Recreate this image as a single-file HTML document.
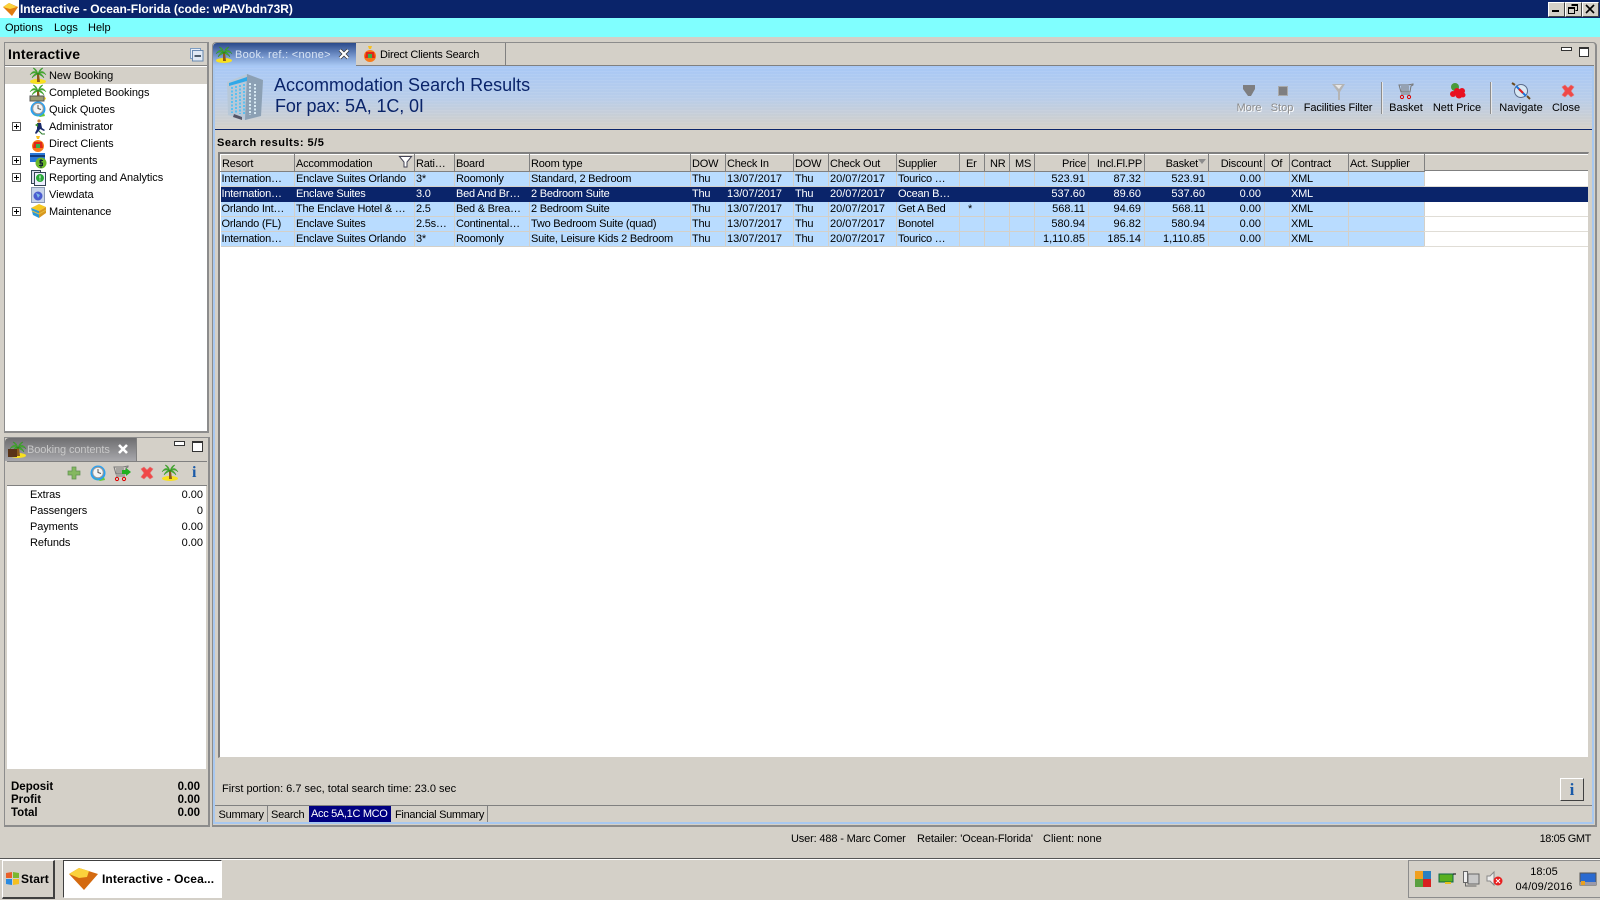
<!DOCTYPE html>
<html><head><meta charset="utf-8"><title>Interactive - Ocean-Florida</title>
<style>
html,body{margin:0;padding:0}
body{width:1600px;height:900px;overflow:hidden;background:#d4d0c8;position:relative;font:11px "Liberation Sans",sans-serif;color:#000}
.a{position:absolute;white-space:nowrap}
svg{position:absolute;overflow:visible}
.tree{left:49px;line-height:17px;height:17px;letter-spacing:-.06px}
.pl{position:absolute;left:12px;width:7px;height:7px;border:1px solid #555;background:#fff}
.pl:before{content:"";position:absolute;left:1px;top:3px;width:5px;height:1px;background:#000}
.pl:after{content:"";position:absolute;left:3px;top:1px;width:1px;height:5px;background:#000}
table{position:absolute;left:220px;top:154px;border-collapse:collapse;table-layout:fixed;width:1204px}
th{height:17px;padding:1px 2px 0 1px;font-weight:normal;text-align:left;background:#d4d0c8;border-top:1px solid #fff;border-left:1px solid #fff;border-right:1px solid #808080;border-bottom:1px solid #808080;box-sizing:border-box;overflow:hidden;white-space:nowrap;letter-spacing:-.2px}
td{height:15px;padding:0 3px 0 1px;background:#b9dcff;border-right:1px solid #d4d0c8;border-bottom:1px solid #d4d0c8;box-sizing:border-box;overflow:hidden;white-space:nowrap;line-height:13px;letter-spacing:-.23px}
td.n,td.r{letter-spacing:0}
tr.s td{background:#0a246a;color:#fff;border-color:#0a246a}
.r{text-align:right}
.tool{top:102px;line-height:13px;transform:translateX(-50%)}
.dis{color:#8c8c8c;text-shadow:1px 1px 0 #fff}
.b{font-weight:bold}
.winb{top:2px;width:15px;height:13px;background:#d4d0c8;border-top:1px solid #fff;border-left:1px solid #fff;border-right:1px solid #404040;border-bottom:1px solid #404040;box-sizing:content-box}
</style></head><body>
<svg width="0" height="0" style="position:absolute">
<defs>
<g id="palm"><ellipse cx="8" cy="14.500" rx="8" ry="2.500" fill="#f8e020"/><path d="M7 15l0-8h2l1 8z" fill="#8a5a1c"/><path d="M8 7C5 3 2 4 0 8 3 5 5 6 8 7zM8 7C11 3 14 4 16 8 13 5 11 6 8 7zM8 7C7 3 5 1 3 1 5 3 6 5 8 7zM8 7C9 3 11 1 13 1 11 3 10 5 8 7zM8 7C5 6 3 8 2 11 4 9 6 8 8 7zM8 7C11 6 13 8 14 11 12 9 10 8 8 7z" fill="#46b030" stroke="#2a8a1a" stroke-width=".4"/></g>
<g id="clock"><circle cx="8" cy="8" r="7.500" fill="#2aa0f0"/><circle cx="8" cy="7.500" r="5.300" fill="#f4f4f4" stroke="#999"/><path d="M8 4v3.500l3 1" stroke="#555" fill="none"/><path d="M4 13c3 3 7 3 10-1l1 3-5 1z" fill="#68c83a"/></g>
<g id="x"><path d="M2 3l3-2 3 3 3-3 3 2-3 4 3 4-3 2-3-3-3 3-3-2 3-4z" fill="#f04848" stroke="#e07878" stroke-width=".6"/></g>
<g id="cart"><path d="M0 2h9l5-1v1l-2 1-1 6H2z" fill="none" stroke="#777"/><path d="M3 3v6M5 3v6M7 3v6M9 3v6" stroke="#777"/><path d="M2 11h9" stroke="#777"/><circle cx="3" cy="14" r="1.600" fill="none" stroke="#d00"/><circle cx="10" cy="14" r="1.600" fill="none" stroke="#d00"/></g>
<g id="client"><path d="M6 0h4l-1 3H7z" fill="#f8c020"/><circle cx="8" cy="10" r="6" fill="#f87a18"/><path d="M4 6h8l1 6H3z" fill="#e02818"/><rect x="6" y="8" width="4" height="4" fill="#3ab04a"/></g>
</defs></svg>

<!-- title bar -->
<div class="a" style="left:0;top:0;width:1600px;height:18px;background:#0a246a"></div>
<div class="a" style="left:0;top:0;width:19px;height:18px;background:#fff"></div>
<svg style="left:3px;top:3px" width="16" height="13"><path d="M0 4 6 0l9 4-6 9z" fill="#e07a10"/><path d="M0 4 6 0l8 4-7 2z" fill="#fbd23c"/></svg>
<div class="a b" style="left:20px;top:1px;color:#fff;font-size:12px;line-height:16px;letter-spacing:-.03px">Interactive - Ocean-Florida (code: wPAVbdn73R)</div>
<div class="a winb" style="left:1548px"></div><div class="a" style="left:1552px;top:10px;width:7px;height:2px;background:#000"></div>
<div class="a winb" style="left:1565px"></div><svg style="left:1568px;top:4px" width="11" height="11"><path d="M3.500 .5h6v6h-2M.5 3.500h6v6h-6zM.5 4.500h6M3.500 1.500h6" fill="none" stroke="#000"/></svg>
<div class="a winb" style="left:1582px"></div><svg style="left:1586px;top:5px" width="9" height="8"><path d="M0 0l8 8M8 0L0 8" stroke="#000" stroke-width="1.600"/></svg>
<!-- menu -->
<div class="a" style="left:0;top:18px;width:1600px;height:19px;background:#80ffff"></div>
<div class="a" style="left:5px;top:21px;line-height:14px">Options</div>
<div class="a" style="left:54px;top:21px;line-height:14px">Logs</div>
<div class="a" style="left:88px;top:21px;line-height:14px">Help</div>

<!-- left top panel -->
<div class="a" style="left:4px;top:42px;width:202px;height:388px;border:2px solid #8c8c8c;border-width:1px 2px 2px 1px;background:#fff;box-sizing:content-box"></div>
<div class="a" style="left:5px;top:43px;width:202px;height:22px;background:#d4d0c8;border-bottom:1px solid #808080"></div>
<div class="a b" style="left:8px;top:46px;font-size:14px;line-height:17px;letter-spacing:.2px">Interactive</div>
<svg style="left:190px;top:48px" width="14" height="14"><rect x=".5" y=".5" width="10" height="10" fill="#e8eef8" stroke="#7d9cc0"/><rect x="2.500" y="2.500" width="10.500" height="10.500" fill="#dfe8f4" stroke="#6a8ab0"/><path d="M4.500 8h6.500" stroke="#123" stroke-width="1.400"/></svg>
<div class="a" style="left:5px;top:67px;width:202px;height:17px;background:#d4d0c8"></div>
<div class="a tree" style="top:68px">New Booking</div>
<div class="a tree" style="top:85px">Completed Bookings</div>
<div class="a tree" style="top:102px">Quick Quotes</div>
<div class="a tree" style="top:119px">Administrator</div>
<div class="a tree" style="top:136px">Direct Clients</div>
<div class="a tree" style="top:153px">Payments</div>
<div class="a tree" style="top:170px">Reporting and Analytics</div>
<div class="a tree" style="top:187px">Viewdata</div>
<div class="a tree" style="top:204px">Maintenance</div>
<div class="pl" style="top:122px"></div><div class="pl" style="top:156px"></div><div class="pl" style="top:173px"></div><div class="pl" style="top:207px"></div>
<svg style="left:30px;top:67px" width="16" height="17"><use href="#palm"/></svg>
<svg style="left:30px;top:84px" width="16" height="17"><use href="#palm"/><rect x="0" y="12" width="14" height="5" fill="#9a9a70" stroke="#555"/></svg>
<svg style="left:30px;top:101px" width="16" height="17"><use href="#clock"/></svg>
<svg style="left:32px;top:119px" width="14" height="16"><circle cx="7" cy="2" r="1.600" fill="#c8803a"/><path d="M5 4h4l1 5 3 2-1 1-4-2-1 2-3 3-1-1 2-4z" fill="#1a2a6a"/><path d="M7 12l3 3h3" stroke="#2a7a2a" fill="none"/><path d="M3 6l3-2v4z" fill="#3a8a2a"/></svg>
<svg style="left:30px;top:136px" width="16" height="16"><use href="#client"/></svg>
<svg style="left:30px;top:153px" width="16" height="16"><rect y="0" width="15" height="9" fill="#2a78d8"/><rect y="2" width="15" height="2" fill="#123a7a"/><circle cx="11" cy="10" r="5.500" fill="#6ab82a"/><path d="M13 7.500h-3v2.500h2.500v2.500H9M11 6v9" stroke="#123" fill="none"/></svg>
<svg style="left:31px;top:170px" width="16" height="16"><rect x=".5" y=".5" width="9" height="13" fill="#dde" stroke="#345"/><rect x="3.500" y="2.500" width="11" height="13" fill="#eef" stroke="#345"/><circle cx="9" cy="8" r="4" fill="#28a838"/><path d="M9 5.500v3M9 9.500v1" stroke="#fff"/></svg>
<svg style="left:31px;top:187px" width="15" height="16"><rect x=".5" y=".5" width="13" height="15" fill="#c8d4ea" stroke="#8a98b4"/><circle cx="7" cy="9" r="4.500" fill="#4a5cd0"/><path d="M5 6l4 2-2 3z" fill="#7ab8e8"/></svg>
<svg style="left:30px;top:203px" width="17" height="16"><path d="M1 5l8-4 7 3-7 4z" fill="#f5c820"/><path d="M1 5l8 3v7L3 12z" fill="#2a98d8"/><path d="M9 8l7-4v6l-7 5z" fill="#d89820"/><path d="M2 8l7 3 7-4" stroke="#e8c040" fill="none"/></svg>

<!-- left bottom panel -->
<div class="a" style="left:4px;top:437px;width:203px;height:387px;border:1px solid #8c8c8c;border-width:1px 2px 2px 1px"></div>
<div class="a" style="left:5px;top:438px;width:131px;height:23px;background:linear-gradient(#6e6e70,#a8a8ac);border-radius:4px 0 0 0;border-right:1px solid #808080"></div>
<div class="a" style="left:7px;top:461px;width:200px;height:1px;background:#808080"></div>
<div class="a" style="left:27px;top:443px;color:#c8c8c8;line-height:14px;letter-spacing:-.1px">Booking contents</div>
<svg style="left:8px;top:441px" width="17" height="17"><use href="#palm" transform="translate(2 0)"/><rect y="8" width="9" height="8" fill="#5a3418"/></svg>
<svg style="left:118px;top:444px" width="10" height="10"><path d="M1 1l8 8M9 1L1 9" stroke="#fff" stroke-width="2.600"/></svg>
<div class="a" style="left:174px;top:441px;width:9px;height:3px;border:1px solid #333;background:#fff"></div>
<div class="a" style="left:192px;top:441px;width:9px;height:8px;border:1px solid #333;border-top-width:2px;background:#fff"></div>
<div class="a" style="left:7px;top:462px;width:200px;height:23px;background:#d4d0c8;border-bottom:1px solid #808080"></div>
<svg style="left:68px;top:467px" width="12" height="12"><path d="M4 0h4v4h4v4H8v4H4V8H0V4h4z" fill="#84b860" stroke="#5f8f52" stroke-width=".7"/></svg>
<svg style="left:90px;top:465px" width="16" height="17"><use href="#clock"/></svg>
<svg style="left:114px;top:465px" width="17" height="17"><use href="#cart"/><path d="M8 5h4V3l5 4-5 4V9H8z" fill="#20b020"/></svg>
<svg style="left:139px;top:466px" width="16" height="16"><use href="#x"/></svg>
<svg style="left:162px;top:464px" width="16" height="17"><use href="#palm"/></svg>
<div class="a" style="left:192px;top:464px;font:bold 16px 'Liberation Serif',serif;line-height:18px;color:#1a5aa8">i</div>
<div class="a" style="left:7px;top:486px;width:199px;height:283px;background:#fff"></div>
<div class="a" style="left:30px;top:488px;line-height:14px;letter-spacing:-.1px">Extras</div><div class="a r" style="right:1397px;top:488px;line-height:14px">0.00</div>
<div class="a" style="left:30px;top:504px;line-height:14px;letter-spacing:-.1px">Passengers</div><div class="a r" style="right:1397px;top:504px;line-height:14px">0</div>
<div class="a" style="left:30px;top:520px;line-height:14px;letter-spacing:-.1px">Payments</div><div class="a r" style="right:1397px;top:520px;line-height:14px">0.00</div>
<div class="a" style="left:30px;top:536px;line-height:14px;letter-spacing:-.1px">Refunds</div><div class="a r" style="right:1397px;top:536px;line-height:14px">0.00</div>
<div class="a b" style="left:11px;top:780.500px;line-height:13px;font-size:11.500px">Deposit<br>Profit<br>Total</div>
<div class="a b r" style="right:1400px;top:780.500px;line-height:13px;font-size:11.500px">0.00<br>0.00<br>0.00</div>

<!-- right panel -->
<div class="a" style="left:212px;top:42px;width:1382px;height:782px;border:1px solid #8c8c8c;border-width:1px 2px 2px 1px;border-radius:4px 4px 0 0"></div>
<div class="a" style="left:213px;top:65px;width:1381px;height:1px;background:#808080"></div>
<div class="a" style="left:213px;top:43px;width:143px;height:23px;background:linear-gradient(#2a4a8a,#7a9ad0 60%,#a8c8f4);border-radius:4px 0 0 0"></div>
<div class="a" style="left:235px;top:48px;color:#d8e4f4;line-height:15px;letter-spacing:.3px">Book. ref.: &lt;none&gt;</div>
<svg style="left:216px;top:46px" width="16" height="17"><use href="#palm"/></svg>
<svg style="left:339px;top:49px" width="10" height="10"><path d="M1 1l8 8M9 1L1 9" stroke="#333" stroke-width="3.600"/><path d="M1 1l8 8M9 1L1 9" stroke="#fff" stroke-width="2.200"/></svg>
<div class="a" style="left:505px;top:43px;width:1px;height:22px;background:#808080"></div>
<svg style="left:362px;top:46px" width="16" height="16"><use href="#client"/></svg>
<div class="a" style="left:380px;top:48px;line-height:15px;letter-spacing:-.2px">Direct Clients Search</div>
<div class="a" style="left:1561px;top:47px;width:9px;height:2px;border:1px solid #333;background:#fff"></div>
<div class="a" style="left:1579px;top:47px;width:8px;height:7px;border:1px solid #333;border-top-width:2px;background:#fff"></div>

<div class="a" style="left:213px;top:66px;width:2px;height:757px;background:#a8c8f0"></div>
<div class="a" style="left:1592px;top:66px;width:2px;height:757px;background:#a8c8f0"></div>
<div class="a" style="left:213px;top:822px;width:1381px;height:2px;background:#a8c8f0"></div>

<!-- banner -->
<div class="a" style="left:215px;top:66px;width:1377px;height:63px;background:repeating-linear-gradient(0deg,rgba(255,255,255,.07) 0 1px,transparent 1px 3px),linear-gradient(#a8c8f6,#b8cdea 50%,#d4d0c8)"></div>
<div class="a" style="left:215px;top:129px;width:1377px;height:1px;background:#0a246a"></div>
<svg style="left:227px;top:74px" width="37" height="47"><path d="M0 8 20 0 36 6 34 42 18 46 1 41z" fill="#b8c8d8"/><path d="M20 0 36 6 34 42 18 46z" fill="#8ca0b4"/><path d="M2 9 20 3v4L2 12z" fill="#30a8e8"/><g stroke="#5ac0f0" stroke-width="2" stroke-dasharray="2 1.500"><path d="M5 13v26M9 12v28M13 11v29M17 10v30"/><path d="M23 9v32M28 10v30" stroke="#d8eaf4"/></g><path d="M7 40l8 3v3l-9-3z" fill="#556"/></svg>
<div class="a" style="left:274px;top:75px;font-size:18px;line-height:21px;color:#0a246a">Accommodation Search Results</div>
<div class="a" style="left:275px;top:95.500px;font-size:18px;line-height:21px;color:#0a246a;letter-spacing:-.12px">For pax: 5A, 1C, 0I</div>

<svg style="left:1243px;top:85px" width="13" height="11"><path d="M0 0h12v4l-4 7H5L0 4z" fill="#7e7e80"/></svg>
<div class="a" style="left:1278px;top:86px;width:8px;height:8px;background:#7e7e80;border:1px solid #aaa"></div>
<svg style="left:1332px;top:83px" width="14" height="18"><path d="M0 1h13L8 9v8H6V9z" fill="#b4b4b4"/><path d="M3 2h7L7 6z" fill="#e8e8e8"/></svg>
<svg style="left:1399px;top:83px" width="16" height="17"><use href="#cart"/></svg>
<svg style="left:1449px;top:83px" width="17" height="16"><circle cx="6" cy="4" r="4" fill="#4a9a3a"/><circle cx="8" cy="8" r="3" fill="#e81020"/><circle cx="13" cy="8" r="3" fill="#e81020"/><circle cx="4" cy="11" r="3" fill="#e81020"/><circle cx="10" cy="12" r="3.500" fill="#e81020"/><circle cx="14" cy="12" r="2.500" fill="#e81020"/></svg>
<svg style="left:1512px;top:82px" width="18" height="18"><circle cx="9" cy="9" r="6.500" fill="#d8e8f4" stroke="#5a6a8a"/><path d="M4 4l10 10" stroke="#1a70d8" stroke-width="2"/><path d="M7 7l4 4" stroke="#e02020" stroke-width="2"/><path d="M0 1l3 2M15 14l3 3" stroke="#6a4a20" stroke-width="2"/></svg>
<svg style="left:1560px;top:84px" width="16" height="16"><use href="#x"/></svg>
<div class="a" style="left:1381px;top:82px;width:1px;height:32px;background:#8c8c8c;border-right:1px solid #e8e8e8"></div>
<div class="a" style="left:1490px;top:82px;width:1px;height:32px;background:#8c8c8c;border-right:1px solid #e8e8e8"></div>
<div class="a tool dis" style="left:1249px">More</div>
<div class="a tool dis" style="left:1282px">Stop</div>
<div class="a tool" style="left:1338px;letter-spacing:-.1px">Facilities Filter</div>
<div class="a tool" style="left:1406px">Basket</div>
<div class="a tool" style="left:1457px">Nett Price</div>
<div class="a tool" style="left:1521px">Navigate</div>
<div class="a tool" style="left:1566px">Close</div>

<div class="a b" style="left:217px;top:136px;line-height:14px;letter-spacing:.5px">Search results: 5/5</div>

<!-- table -->
<div class="a" style="left:218px;top:152px;width:1368px;height:603px;background:#fff;border:1px solid #808080;border-width:2px 1px 1px 2px;border-color:#808080 #d4d0c8 #d4d0c8 #808080"></div>
<div class="a" style="left:1424px;top:154px;width:164px;height:17px;background:#d4d0c8;border-bottom:1px solid #808080;border-top:1px solid #fff;box-sizing:border-box"></div>
<table>
<colgroup><col style="width:74px"><col style="width:120px"><col style="width:40px"><col style="width:75px"><col style="width:161px"><col style="width:35px"><col style="width:68px"><col style="width:35px"><col style="width:68px"><col style="width:63px"><col style="width:25px"><col style="width:25px"><col style="width:25px"><col style="width:54px"><col style="width:56px"><col style="width:64px"><col style="width:56px"><col style="width:25px"><col style="width:59px"><col style="width:76px"></colgroup>
<tr><th>Resort</th><th>Accommodation</th><th>Rati…</th><th>Board</th><th>Room type</th><th>DOW</th><th>Check In</th><th>DOW</th><th>Check Out</th><th>Supplier</th><th style="padding-left:6px">Er</th><th style="padding-left:5px">NR</th><th style="padding-left:5px">MS</th><th class="r">Price</th><th class="r">Incl.Fl.PP</th><th class="r" style="padding-right:10px">Basket</th><th class="r">Discount</th><th style="padding-left:6px">Of</th><th>Contract</th><th>Act. Supplier</th></tr>
<tr><td>Internation…</td><td>Enclave Suites Orlando</td><td>3*</td><td>Roomonly</td><td>Standard, 2 Bedroom</td><td>Thu</td><td class="n">13/07/2017</td><td>Thu</td><td class="n">20/07/2017</td><td>Tourico …</td><td></td><td></td><td></td><td class="r">523.91</td><td class="r">87.32</td><td class="r">523.91</td><td class="r">0.00</td><td></td><td>XML</td><td></td></tr>
<tr class="s"><td>Internation…</td><td>Enclave Suites</td><td>3.0</td><td>Bed And Br…</td><td>2 Bedroom Suite</td><td>Thu</td><td class="n">13/07/2017</td><td>Thu</td><td class="n">20/07/2017</td><td>Ocean B…</td><td></td><td></td><td></td><td class="r">537.60</td><td class="r">89.60</td><td class="r">537.60</td><td class="r">0.00</td><td></td><td>XML</td><td></td></tr>
<tr><td>Orlando Int…</td><td>The Enclave Hotel &amp; …</td><td>2.5</td><td>Bed &amp; Brea…</td><td>2 Bedroom Suite</td><td>Thu</td><td class="n">13/07/2017</td><td>Thu</td><td class="n">20/07/2017</td><td>Get A Bed</td><td style="padding-left:8px">*</td><td></td><td></td><td class="r">568.11</td><td class="r">94.69</td><td class="r">568.11</td><td class="r">0.00</td><td></td><td>XML</td><td></td></tr>
<tr><td>Orlando (FL)</td><td>Enclave Suites</td><td>2.5s…</td><td>Continental…</td><td>Two Bedroom Suite (quad)</td><td>Thu</td><td class="n">13/07/2017</td><td>Thu</td><td class="n">20/07/2017</td><td>Bonotel</td><td></td><td></td><td></td><td class="r">580.94</td><td class="r">96.82</td><td class="r">580.94</td><td class="r">0.00</td><td></td><td>XML</td><td></td></tr>
<tr><td>Internation…</td><td>Enclave Suites Orlando</td><td>3*</td><td>Roomonly</td><td>Suite, Leisure Kids 2 Bedroom</td><td>Thu</td><td class="n">13/07/2017</td><td>Thu</td><td class="n">20/07/2017</td><td>Tourico …</td><td></td><td></td><td></td><td class="r">1,110.85</td><td class="r">185.14</td><td class="r">1,110.85</td><td class="r">0.00</td><td></td><td>XML</td><td></td></tr>
</table>
<div class="a" style="left:1424px;top:172px;width:164px;height:75px;background:repeating-linear-gradient(transparent 0 14px,#e0ddd6 14px 15px)"></div>
<div class="a" style="left:1424px;top:187px;width:164px;height:15px;background:#0a246a"></div>
<svg style="left:399px;top:156px" width="13" height="12"><path d="M.5.500h12L8 6v5H5V6z" fill="#fff" stroke="#445"/></svg>
<svg style="left:1198px;top:159px" width="8" height="5"><path d="M0 0h8L4 5z" fill="#8c8c8c"/></svg>

<!-- footer -->
<div class="a" style="left:222px;top:782px;line-height:14px">First portion: 6.7 sec, total search time: 23.0 sec</div>
<div class="a" style="left:1560px;top:778px;width:22px;height:21px;background:#d4d0c8;border-top:1px solid #fff;border-left:1px solid #fff;border-right:1px solid #404040;border-bottom:1px solid #404040;text-align:center;font:bold 17px/21px 'Liberation Serif',serif;color:#1a5aa8">i</div>
<div class="a" style="left:215px;top:805px;width:1377px;height:1px;background:#808080"></div>
<div class="a" style="left:218.500px;top:807.500px;line-height:15px;letter-spacing:-.25px">Summary</div>
<div class="a" style="left:267px;top:806px;width:1px;height:16px;background:#808080"></div>
<div class="a" style="left:271px;top:807.500px;line-height:15px;letter-spacing:-.25px">Search</div>
<div class="a" style="left:309px;top:806px;width:82px;height:16px;background:#000080;color:#fff;line-height:17px;text-indent:2px;letter-spacing:-.32px">Acc 5A,1C MCO</div>
<div class="a" style="left:395px;top:807.500px;line-height:15px;letter-spacing:-.3px">Financial Summary</div>
<div class="a" style="left:487px;top:806px;width:1px;height:16px;background:#808080"></div>

<!-- status -->
<div class="a" style="left:791px;top:832px;line-height:14px;letter-spacing:-.15px">User: 488 - Marc Comer</div>
<div class="a" style="left:917px;top:832px;line-height:14px;letter-spacing:-.08px">Retailer: 'Ocean-Florida'</div>
<div class="a" style="left:1043px;top:832px;line-height:14px">Client: none</div>
<div class="a r" style="right:9px;top:832px;line-height:14px;letter-spacing:-.4px">18:05 GMT</div>

<!-- taskbar -->
<div class="a" style="left:0;top:858px;width:1600px;height:1px;background:#555"></div>
<div class="a" style="left:0;top:859px;width:1600px;height:1px;background:#fff"></div>
<div class="a" style="left:2px;top:860px;width:50px;height:36px;border:1px solid #fff;border-right:2px solid #404040;border-bottom:2px solid #404040;box-sizing:content-box"></div>
<svg style="left:5px;top:871px" width="15" height="15"><path d="M1 2l6-1v6H1z" fill="#e8602a"/><path d="M8 1l6 1v5H8z" fill="#7ab830"/><path d="M1 8h6v6l-6-1z" fill="#2a8ae0"/><path d="M8 8h6v5l-6 1z" fill="#f5c020"/></svg>
<div class="a b" style="left:21px;top:872px;font-size:12px;line-height:15px;letter-spacing:.1px">Start</div>
<div class="a" style="left:63px;top:860px;width:157px;height:36px;background:#fff;border:1px solid #404040;border-right:1px solid #fff;border-bottom:1px solid #fff;box-sizing:content-box"></div>
<svg style="left:69px;top:868px" width="29" height="22"><path d="M0 6 10 0l19 6-14 16z" fill="#d46a10"/><path d="M0 6 10 0l10 3-2 6-8 1z" fill="#fbd23c"/></svg>
<div class="a b" style="left:102px;top:872px;font-size:12px;line-height:15px;letter-spacing:.1px">Interactive - Ocea...</div>
<div class="a" style="left:1408px;top:860px;width:192px;height:36px;border:1px solid #8c8c8c;border-right:0;box-sizing:content-box"></div>
<svg style="left:1415px;top:871px" width="17" height="16"><rect width="8" height="8" fill="#f0a020"/><rect x="8" width="8" height="8" fill="#2a80c0"/><rect y="8" width="8" height="8" fill="#5aa040"/><rect x="8" y="8" width="8" height="8" fill="#d82020"/></svg>
<svg style="left:1439px;top:873px" width="17" height="12"><rect y="1" width="14" height="8" fill="#58b020" stroke="#164"/><rect x="6" y="9" width="6" height="2" fill="#e8c020"/><path d="M14 1h3" stroke="#000"/></svg>
<svg style="left:1463px;top:871px" width="16" height="16"><rect x="5" y="3" width="11" height="10" fill="#c8c8c8" stroke="#666"/><rect x=".5" y=".5" width="4" height="11" fill="#eee" stroke="#666"/><path d="M2.500 11v4h11" stroke="#666" fill="none"/></svg>
<svg style="left:1487px;top:872px" width="17" height="15"><path d="M0 4h3l4-4v13L3 9H0z" fill="#eee" stroke="#888"/><circle cx="11" cy="9" r="4.500" fill="#e82020"/><path d="M9 7l4 4M13 7l-4 4" stroke="#fff"/></svg>
<div class="a" style="left:1524px;top:865px;width:40px;text-align:center;line-height:14px">18:05</div>
<div class="a" style="left:1514px;top:880px;width:60px;text-align:center;line-height:14px;letter-spacing:.2px">04/09/2016</div>
<svg style="left:1580px;top:873px" width="16" height="13"><rect width="16" height="12" fill="#2a6ad0" stroke="#555"/><rect x="0" y="9" width="16" height="3" fill="#99a"/><rect x="1" y="8" width="4" height="4" fill="#e8a020"/></svg>
</body></html>
